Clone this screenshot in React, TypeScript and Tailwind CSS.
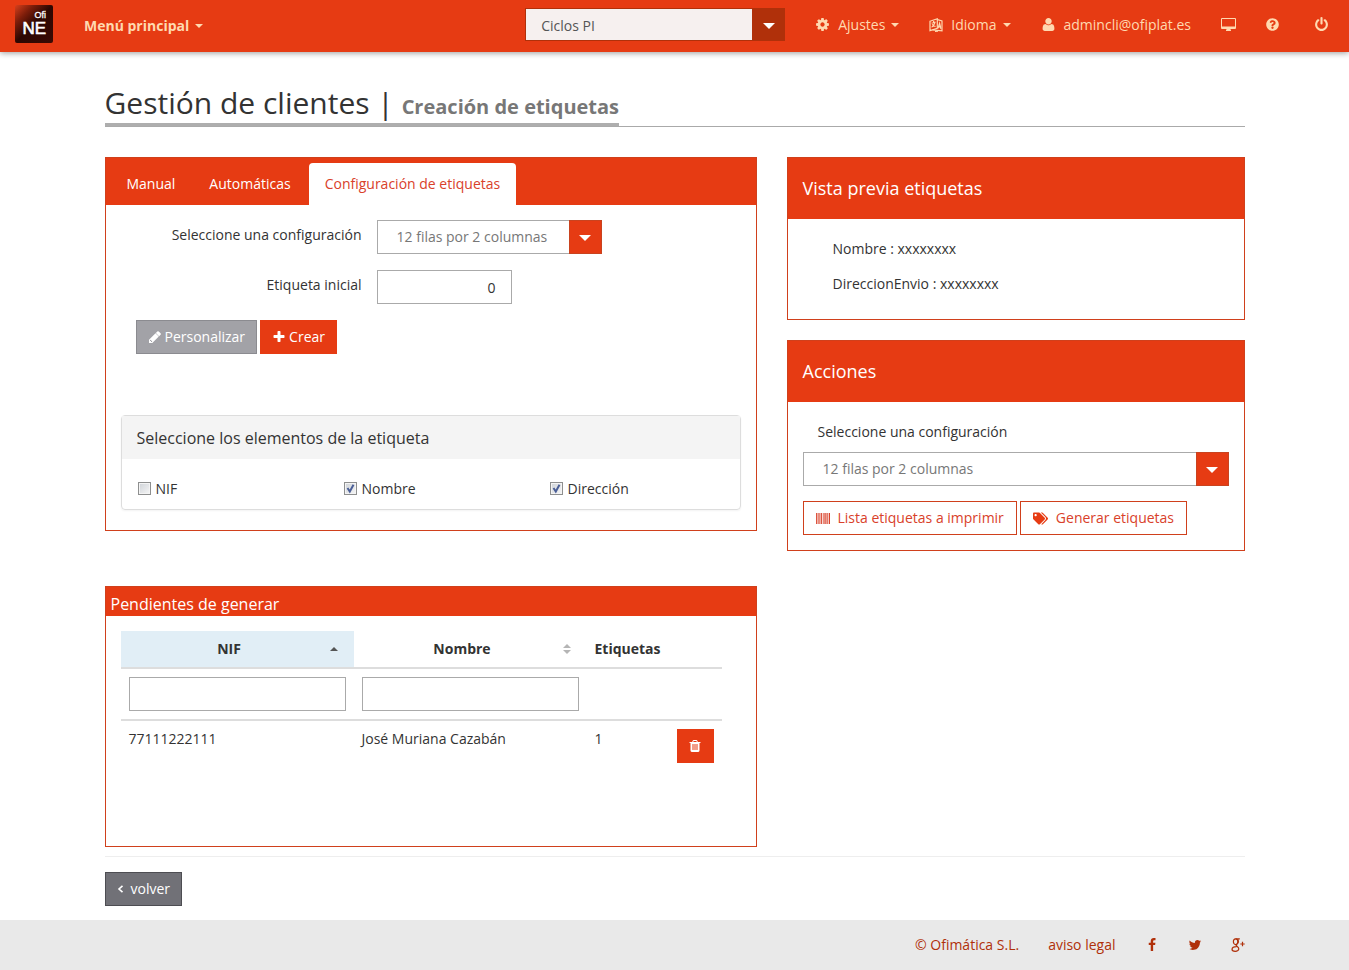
import { useState, type ReactNode } from "react"
import { FaQuestionCircle, FaTags } from "react-icons/fa"
import { clsx } from "clsx"

const icons = {
  cog: "M1152 896q0-106-75-181t-181-75-181 75-75 181 75 181 181 75 181-75 75-181zm512-109v222q0 12-8 23t-20 13l-185 28q-19 54-39 91 35 50 107 138 10 12 10 25t-9 23q-27 37-99 108t-94 71q-12 0-26-9l-138-108q-44 23-91 38-16 136-29 186-7 28-36 28h-222q-14 0-24.5-8.5t-11.5-21.5l-28-184q-49-16-90-37l-141 107q-10 9-25 9-14 0-25-11-126-114-165-168-7-10-7-23 0-12 8-23 15-21 51-66.5t54-70.5q-27-50-41-99l-183-27q-13-2-21-12.5t-8-23.5v-222q0-12 8-23t19-13l186-28q14-46 39-92-40-57-107-138-10-12-10-24 0-10 9-23 26-36 98.5-107.5t94.5-71.5q13 0 26 10l138 107q44-23 91-38 16-136 29-186 7-28 36-28h222q14 0 24.5 8.5t11.5 21.5l28 184q49 16 90 37l142-107q9-9 24-9 13 0 25 10 129 119 165 170 7 8 7 22 0 12-8 23-15 21-51 66.5t-54 70.5q26 50 41 98l183 28q13 2 21 12.5t8 23.5z",
  user: "M1600 1405q0 120-73 189.5t-194 69.5h-874q-121 0-194-69.5t-73-189.5q0-53 3.5-103.5t14-109 26.5-108.5 43-97.5 62-81 85.5-53.5 111.5-20q9 0 42 21.5t74.5 48 108 48 133.5 21.5 133.5-21.5 108-48 74.5-48 42-21.5q61 0 111.5 20t85.5 53.5 62 81 43 97.5 26.5 108.5 14 109 3.5 103.5zm-320-893q0 159-112.5 271.5t-271.5 112.5-271.5-112.5-112.5-271.5 112.5-271.5 271.5-112.5 271.5 112.5 112.5 271.5z",
  power: "M1664 896q0 156-61 298t-164 245-245 164-298 61-298-61-245-164-164-245-61-298q0-182 80.5-343t226.5-270q43-32 95.5-25t83.5 50q32 42 24.5 94.5t-49.5 84.5q-98 74-151.5 181t-53.5 228q0 104 40.5 198.5t109.5 163.5 163.5 109.5 198.5 40.5 198.5-40.5 163.5-109.5 109.5-163.5 40.5-198.5q0-121-53.5-228t-151.5-181q-42-32-49.5-84.5t24.5-94.5q31-43 84-50t95 25q146 109 226.5 270t80.5 343zm-640-768v640q0 52-38 90t-90 38-90-38-38-90v-640q0-52 38-90t90-38 90 38 38 90z",
  pencil: "M491 1536l60-60-235-235-60 60v107h128v128h107zM960 416l416 416-832 832h-416v-416zm683 96q0 53-37 90l-186 186-416-416 186-185q36-38 90-38 53 0 91 38l235 234q37 39 37 91z",
  plus: "M1600 736v192q0 40-28 68t-68 28h-416v416q0 40-28 68t-68 28h-192q-40 0-68-28t-28-68v-416h-416q-40 0-68-28t-28-68v-192q0-40 28-68t68-28h416v-416q0-40 28-68t68-28h192q40 0 68 28t28 68v416h416q40 0 68 28t28 68z",
  trash: "M704 1376v-704q0-14-9-23t-23-9h-64q-14 0-23 9t-9 23v704q0 14 9 23t23 9h64q14 0 23-9t9-23zm256 0v-704q0-14-9-23t-23-9h-64q-14 0-23 9t-9 23v704q0 14 9 23t23 9h64q14 0 23-9t9-23zm256 0v-704q0-14-9-23t-23-9h-64q-14 0-23 9t-9 23v704q0 14 9 23t23 9h64q14 0 23-9t9-23zm-544-992h448l-48-117q-7-9-17-11h-317q-10 2-17 11zm928 32v64q0 14-9 23t-23 9h-96v948q0 83-47 143.5t-113 60.5h-832q-66 0-113-58.5t-47-141.5v-952h-96q-14 0-23-9t-9-23v-64q0-14 9-23t23-9h309l70-167q15-37 54-63t79-26h320q40 0 79 26t54 63l70 167h309q14 0 23 9t9 23z",
  facebook: "M1343 12v264h-157q-86 0-116 36t-30 108v189h293l-39 296h-254v759h-306v-759h-255v-296h255v-218q0-186 104-288.5t277-102.5q147 0 228 12z",
  twitter: "M1684 408q-67 98-162 167 1 14 1 42 0 130-38 259.5t-115.5 248.5-184.5 210.5-258 146-323 54.5q-271 0-496-145 35 4 78 4 225 0 401-138-105-2-188-64.5t-114-159.5q33 5 61 5 43 0 85-11-112-23-185.5-111.5t-73.5-205.5v-4q68 38 146 41-66-44-105-115t-39-154q0-88 44-163 121 149 294.5 238.5t371.5 99.5q-8-38-8-74 0-134 94.5-228.5t228.5-94.5q140 0 236 102 109-21 205-78-37 115-142 178 93-10 186-50z",
}

function Icon({ name, className = "size-3.5" }: { name: keyof typeof icons; className?: string }) {
  return (
    <svg viewBox="0 0 1792 1792" fill="currentColor" className={className} aria-hidden="true">
      <path d={icons[name]} />
    </svg>
  )
}

function Caret({ className = "h-1 w-2" }: { className?: string }) {
  return (
    <svg viewBox="0 0 8 4" fill="currentColor" preserveAspectRatio="none" className={className} aria-hidden="true">
      <path d="M0 0h8L4 4z" />
    </svg>
  )
}

function LanguageIcon() {
  return (
    <svg viewBox="0 0 14 14" fill="none" stroke="currentColor" strokeWidth="1.2" className="size-3.5" aria-hidden="true">
      <path d="M1 3.2 8.3.8v9.4L1 12.6z" />
      <path d="M8.5 1.6 13 3v9.8L3.5 11.8" />
      <path d="M2.6 5.2 6.6 4M4.6 3v1.6M6 4.4Q5 8 2.6 9.2M3.2 6.2Q4.6 8.4 6.6 8.4" />
      <path d="m9 10.4 1.6-5.2 1.4 5.8M9.5 8.6l2 .5" />
      <path d="m6 13.4 3-.2" />
    </svg>
  )
}

function DesktopIcon() {
  return (
    <svg viewBox="0 0 15 13" fill="currentColor" className="h-[13px] w-[15px]" aria-hidden="true">
      <path fillRule="evenodd" d="M1 0h13a1 1 0 0 1 1 1v9a1 1 0 0 1-1 1H9.5q0 .8.5 1.2v.8H5v-.8q.5-.4.5-1.2H1a1 1 0 0 1-1-1V1a1 1 0 0 1 1-1zm0 1v7.5h13V1z" />
    </svg>
  )
}

function BarcodeIcon() {
  return (
    <svg viewBox="0 0 14 11" fill="currentColor" className="h-[11px] w-3.5" aria-hidden="true">
      <path d="M0 0h.9v11H0zM1.3 0h.4v11h-.4zM2.4 0h.7v11h-.7zM3.5 0h.7v11h-.7zM4.8 0h1.1v11H4.8zM6.8 0h.7v11h-.7zM7.9 0h.7v11h-.7zM9 0h.7v11H9zM10.5 0h.9v11h-.9zM11.7 0h.5v11h-.5zM12.9 0H14v11h-1.1z" />
    </svg>
  )
}

function GooglePlusIcon() {
  return (
    <svg viewBox="0 0 14 14" fill="none" stroke="currentColor" strokeWidth="1.2" className="size-3.5" aria-hidden="true">
      <ellipse cx="4.6" cy="3.7" rx="2.2" ry="2.9" />
      <path d="M4.6.8h4.2M6.2.9Q7.6 2 7.4 4 7.2 5.4 5.6 6.4 4.6 7.2 6 8.2q2 1.4 1.8 2.8-.3 2.3-3.6 2.3Q1 13.2 1 11.2 1.2 8.7 5.6 8.6" />
      <path d="M11.5 3.8v4.4M9.3 6h4.4" />
    </svg>
  )
}

function Logo() {
  return (
    <svg viewBox="0 0 38 38" className="size-[38px]" role="img" aria-label="Ofi NE">
      <defs>
        <linearGradient id="logo" x1="0" y1="0" x2="1" y2="1">
          <stop offset="0" stopColor="#d8401c" />
          <stop offset=".25" stopColor="#7c1d0a" />
          <stop offset=".5" stopColor="#2c0702" />
          <stop offset="1" stopColor="#3a0b04" />
        </linearGradient>
      </defs>
      <rect width="38" height="38" rx="2" fill="url(#logo)" />
      <text x="31" y="13" textAnchor="end" fill="#fff" stroke="#fff" strokeWidth=".3" fontSize="9" fontFamily="Liberation Sans, sans-serif">
        Ofi
      </text>
      <text x="31" y="29" textAnchor="end" fill="#fff" stroke="#fff" strokeWidth=".6" fontSize="17" fontFamily="Liberation Sans, sans-serif">
        NE
      </text>
    </svg>
  )
}

function ConfigSelect({ id, className }: { id: string; className?: string }) {
  return (
    <div className={clsx("relative h-[34px]", className)}>
      <select id={id} className="size-full appearance-none border border-[#aaa] bg-white pr-9 pl-[19px] text-[#777]">
        <option>12 filas por 2 columnas</option>
      </select>
      <span className="pointer-events-none absolute inset-y-0 right-0 flex w-[33px] items-center justify-center border border-[#c9431f] bg-[#e63b13] text-white">
        <Caret className="mt-0.5 h-1.5 w-3" />
      </span>
    </div>
  )
}

function Panel({ title, children }: { title: string; children: ReactNode }) {
  return (
    <section className="border border-[#d0401c] bg-white">
      <h2 className="bg-[#e63b13] px-[15px] pt-[18px] pb-[19px] text-lg leading-6 text-white">{title}</h2>
      {children}
    </section>
  )
}

function Header() {
  return (
    <header className="flex h-13 items-center justify-between bg-[#e63b13] pr-5 pl-[15px] text-[#ffd9b0] shadow-[0_1px_6px_rgba(0,0,0,0.4)]">
      <div className="flex items-center gap-[31px] pb-1">
        <a href="#inicio">
          <Logo />
        </a>
        <button className="flex items-center gap-1.5 pt-1 font-bold">
          Menú principal <Caret />
        </button>
      </div>
      <nav className="flex items-center gap-[30px] pb-[3px]">
        <div className="relative h-[33px] w-[260px]">
          <select aria-label="Empresa" className="size-full appearance-none border border-[#b0300a] bg-[#f6f0ef] pt-0.5 pr-9 pl-[15px] text-[#555]">
            <option>Ciclos PI</option>
          </select>
          <span className="pointer-events-none absolute inset-y-0 right-0 flex w-[33px] items-center justify-center bg-[#b0300a] text-white">
            <Caret className="mt-0.5 h-1.5 w-3" />
          </span>
        </div>
        <button className="flex items-center gap-1.5">
          <Icon name="cog" className="mr-0.5 size-[15px]" /> Ajustes <Caret />
        </button>
        <button className="flex items-center gap-1.5">
          <span className="mr-0.5">
            <LanguageIcon />
          </span>
          Idioma <Caret />
        </button>
        <a href="#usuario" className="flex items-center gap-2">
          <Icon name="user" className="size-[15px]" /> admincli@ofiplat.es
        </a>
        <button aria-label="Escritorio">
          <DesktopIcon />
        </button>
        <button aria-label="Ayuda">
          <FaQuestionCircle className="size-[13px]" />
        </button>
        <button aria-label="Salir" className="pl-[5px]">
          <Icon name="power" className="size-[15px]" />
        </button>
      </nav>
    </header>
  )
}

const tabs = ["Manual", "Automáticas", "Configuración de etiquetas"]

function LabelSettings() {
  const [active, setActive] = useState(tabs[2])
  const [fields, setFields] = useState([
    { name: "NIF", checked: false },
    { name: "Nombre", checked: true },
    { name: "Dirección", checked: true },
  ])

  const toggle = (name: string) =>
    setFields(fields.map((f) => (f.name === name ? { ...f, checked: !f.checked } : f)))

  return (
    <section className="border border-[#d0401c] bg-white">
      <div role="tablist" className="flex gap-0.5 bg-[#e63b13] px-[5px] pt-[5px]">
        {tabs.map((tab) => (
          <button
            key={tab}
            role="tab"
            aria-selected={tab === active}
            onClick={() => setActive(tab)}
            className={clsx(
              "rounded-t px-4 py-[11px]",
              tab === active ? "bg-white text-[#d9412a]" : "text-white"
            )}
          >
            {tab}
          </button>
        ))}
      </div>
      <div className="px-[15px] pt-[15px] pb-5">
        <div className="mb-4 flex gap-[15px]">
          <label htmlFor="config" className="w-[241px] pt-[5px] text-right">
            Seleccione una configuración
          </label>
          <ConfigSelect id="config" className="w-[225px]" />
        </div>
        <div className="mb-4 flex gap-[15px]">
          <label htmlFor="inicial" className="w-[241px] pt-[5px] text-right">
            Etiqueta inicial
          </label>
          <input id="inicial" defaultValue="0" className="h-[34px] w-[135px] border border-[#aaa] px-[15px] text-right" />
        </div>
        <div className="mb-[61px] flex gap-[3px] pl-[15px]">
          <button className="flex h-[34px] items-center gap-[3px] border border-[#8b8b90] bg-[#a2a2a7] px-[11px] text-white">
            <Icon name="pencil" /> Personalizar
          </button>
          <button className="flex h-[34px] items-center gap-[3px] bg-[#e63b13] px-3 text-white">
            <Icon name="plus" /> Crear
          </button>
        </div>
        <fieldset className="rounded border border-[#ddd] shadow-xs">
          <div className="bg-[#f4f4f4] px-[15px] pt-3 pb-[11px] text-base leading-5">Seleccione los elementos de la etiqueta</div>
          <div className="grid grid-cols-3 pt-5 pb-2.5">
            {fields.map(({ name, checked }) => (
              <label key={name} className="flex items-center gap-[5px] pl-4">
                <span className="relative -mt-0.5 size-[13px]">
                  <input
                    type="checkbox"
                    checked={checked}
                    onChange={() => toggle(name)}
                    className="block size-[13px] appearance-none border border-[#8e8f8f] bg-linear-to-br from-[#cfd3d8] to-[#f6f6f6] shadow-[inset_0_0_0_1px_#f4f4f4]"
                  />
                  {checked && (
                    <svg viewBox="0 0 13 13" fill="none" stroke="#4b5f97" strokeWidth="2" className="pointer-events-none absolute inset-0" aria-hidden="true">
                      <path d="m3.5 6 2.3 3.5L9.5 2.8" />
                    </svg>
                  )}
                </span>
                {name}
              </label>
            ))}
          </div>
        </fieldset>
      </div>
    </section>
  )
}

const pending = [{ nif: "77111222111", name: "José Muriana Cazabán", labels: 1 }]

function PendingTable() {
  return (
    <section className="border border-[#d0401c] bg-white">
      <h2 className="bg-[#e63b13] px-[5px] pt-[7px] pb-0.5 text-base leading-5 text-white">Pendientes de generar</h2>
      <div className="pt-[15px] pr-[34px] pb-[75px] pl-[15px]">
        <table className="w-full table-fixed border-collapse text-left">
          <colgroup>
            <col className="w-[233px]" />
            <col className="w-[233px]" />
            <col className="w-[82px]" />
            <col />
          </colgroup>
          <thead>
            <tr className="border-b-2 border-[#ddd]">
              <th className="bg-[#e1eef6] p-2">
                <button className="flex w-full items-center pr-2">
                  <span className="flex-1 text-center">NIF</span>
                  <Caret className="h-1 w-2 rotate-180 text-[#555]" />
                </button>
              </th>
              <th className="p-2">
                <button className="flex w-full items-center pr-2">
                  <span className="flex-1 text-center">Nombre</span>
                  <span className="flex flex-col gap-0.5 text-[#b5b5b5]">
                    <Caret className="h-1 w-2 rotate-180" />
                    <Caret />
                  </span>
                </button>
              </th>
              <th className="p-2">Etiquetas</th>
              <th />
            </tr>
            <tr className="border-b-2 border-[#ddd]">
              <td className="p-2">
                <input aria-label="Filtrar por NIF" className="block h-[34px] w-full border border-[#aaa] px-2" />
              </td>
              <td className="p-2">
                <input aria-label="Filtrar por nombre" className="block h-[34px] w-full border border-[#aaa] px-2" />
              </td>
              <td />
              <td />
            </tr>
          </thead>
          <tbody>
            {pending.map((row) => (
              <tr key={row.nif} className="align-top">
                <td className="p-2">{row.nif}</td>
                <td className="p-2">{row.name}</td>
                <td className="p-2">{row.labels}</td>
                <td className="p-2">
                  <button aria-label="Eliminar" className="flex h-[34px] w-[37px] items-center justify-center bg-[#e63b13] text-white">
                    <Icon name="trash" />
                  </button>
                </td>
              </tr>
            ))}
          </tbody>
        </table>
      </div>
    </section>
  )
}

export default function App() {
  return (
    <div className="bg-white font-['Open_Sans',sans-serif] text-sm leading-5 text-[#333]">
      <Header />
      <main className="mx-auto max-w-[1140px] pt-[33px] pb-3.5">
        <div className="mb-[30px] flex border-b border-[#aaa]">
          <h1 className="border-b-3 border-[#aeaeae] pb-0.5 text-3xl leading-9">
            Gestión de clientes | <small className="text-xl leading-none font-bold text-[#777]">Creación de etiquetas</small>
          </h1>
        </div>

        <div className="grid grid-cols-[652fr_458fr] gap-[30px]">
          <div className="flex flex-col gap-[55px]">
            <LabelSettings />
            <PendingTable />
          </div>
          <div className="flex flex-col gap-5">
            <Panel title="Vista previa etiquetas">
              <div className="flex flex-col gap-[15px] px-[45px] pt-5 pb-[25px]">
                <p>Nombre : xxxxxxxx</p>
                <p>DireccionEnvio : xxxxxxxx</p>
              </div>
            </Panel>
            <Panel title="Acciones">
              <div className="p-[15px] pt-5">
                <label htmlFor="accion" className="mb-2.5 block px-[15px]">
                  Seleccione una configuración
                </label>
                <ConfigSelect id="accion" className="mb-[15px]" />
                <div className="flex gap-[3px] text-[#d9412a]">
                  <button className="flex h-[34px] items-center gap-2 border border-[#d0401c] px-3">
                    <BarcodeIcon /> Lista etiquetas a imprimir
                  </button>
                  <button className="flex h-[34px] items-center gap-2 border border-[#d0401c] px-3">
                    <FaTags className="size-[15px] text-[#e63b13]" /> Generar etiquetas
                  </button>
                </div>
              </div>
            </Panel>
          </div>
        </div>

        <div className="mt-[9px] border-t border-[#eee] pt-[15px]">
          <button className="flex h-[34px] items-center gap-[7px] border border-[#4d4d52] bg-[#717177] px-[11px] text-white">
            <svg viewBox="0 0 7 8" fill="none" stroke="currentColor" strokeWidth="1.6" className="h-2 w-[7px]" aria-hidden="true">
              <path d="M5.5.8 2 4l3.5 3.2" />
            </svg>
            volver
          </button>
        </div>
      </main>

      <footer className="bg-[#e9e9e9] py-[15px] text-[#b0300a]">
        <div className="mx-auto flex max-w-[1140px] items-center justify-end gap-[29px]">
          <a href="#ofimatica">© Ofimática S.L.</a>
          <a href="#legal">aviso legal</a>
          <a href="#facebook" aria-label="Facebook">
            <Icon name="facebook" />
          </a>
          <a href="#twitter" aria-label="Twitter">
            <Icon name="twitter" />
          </a>
          <a href="#google" aria-label="Google+">
            <GooglePlusIcon />
          </a>
        </div>
      </footer>
    </div>
  )
}
